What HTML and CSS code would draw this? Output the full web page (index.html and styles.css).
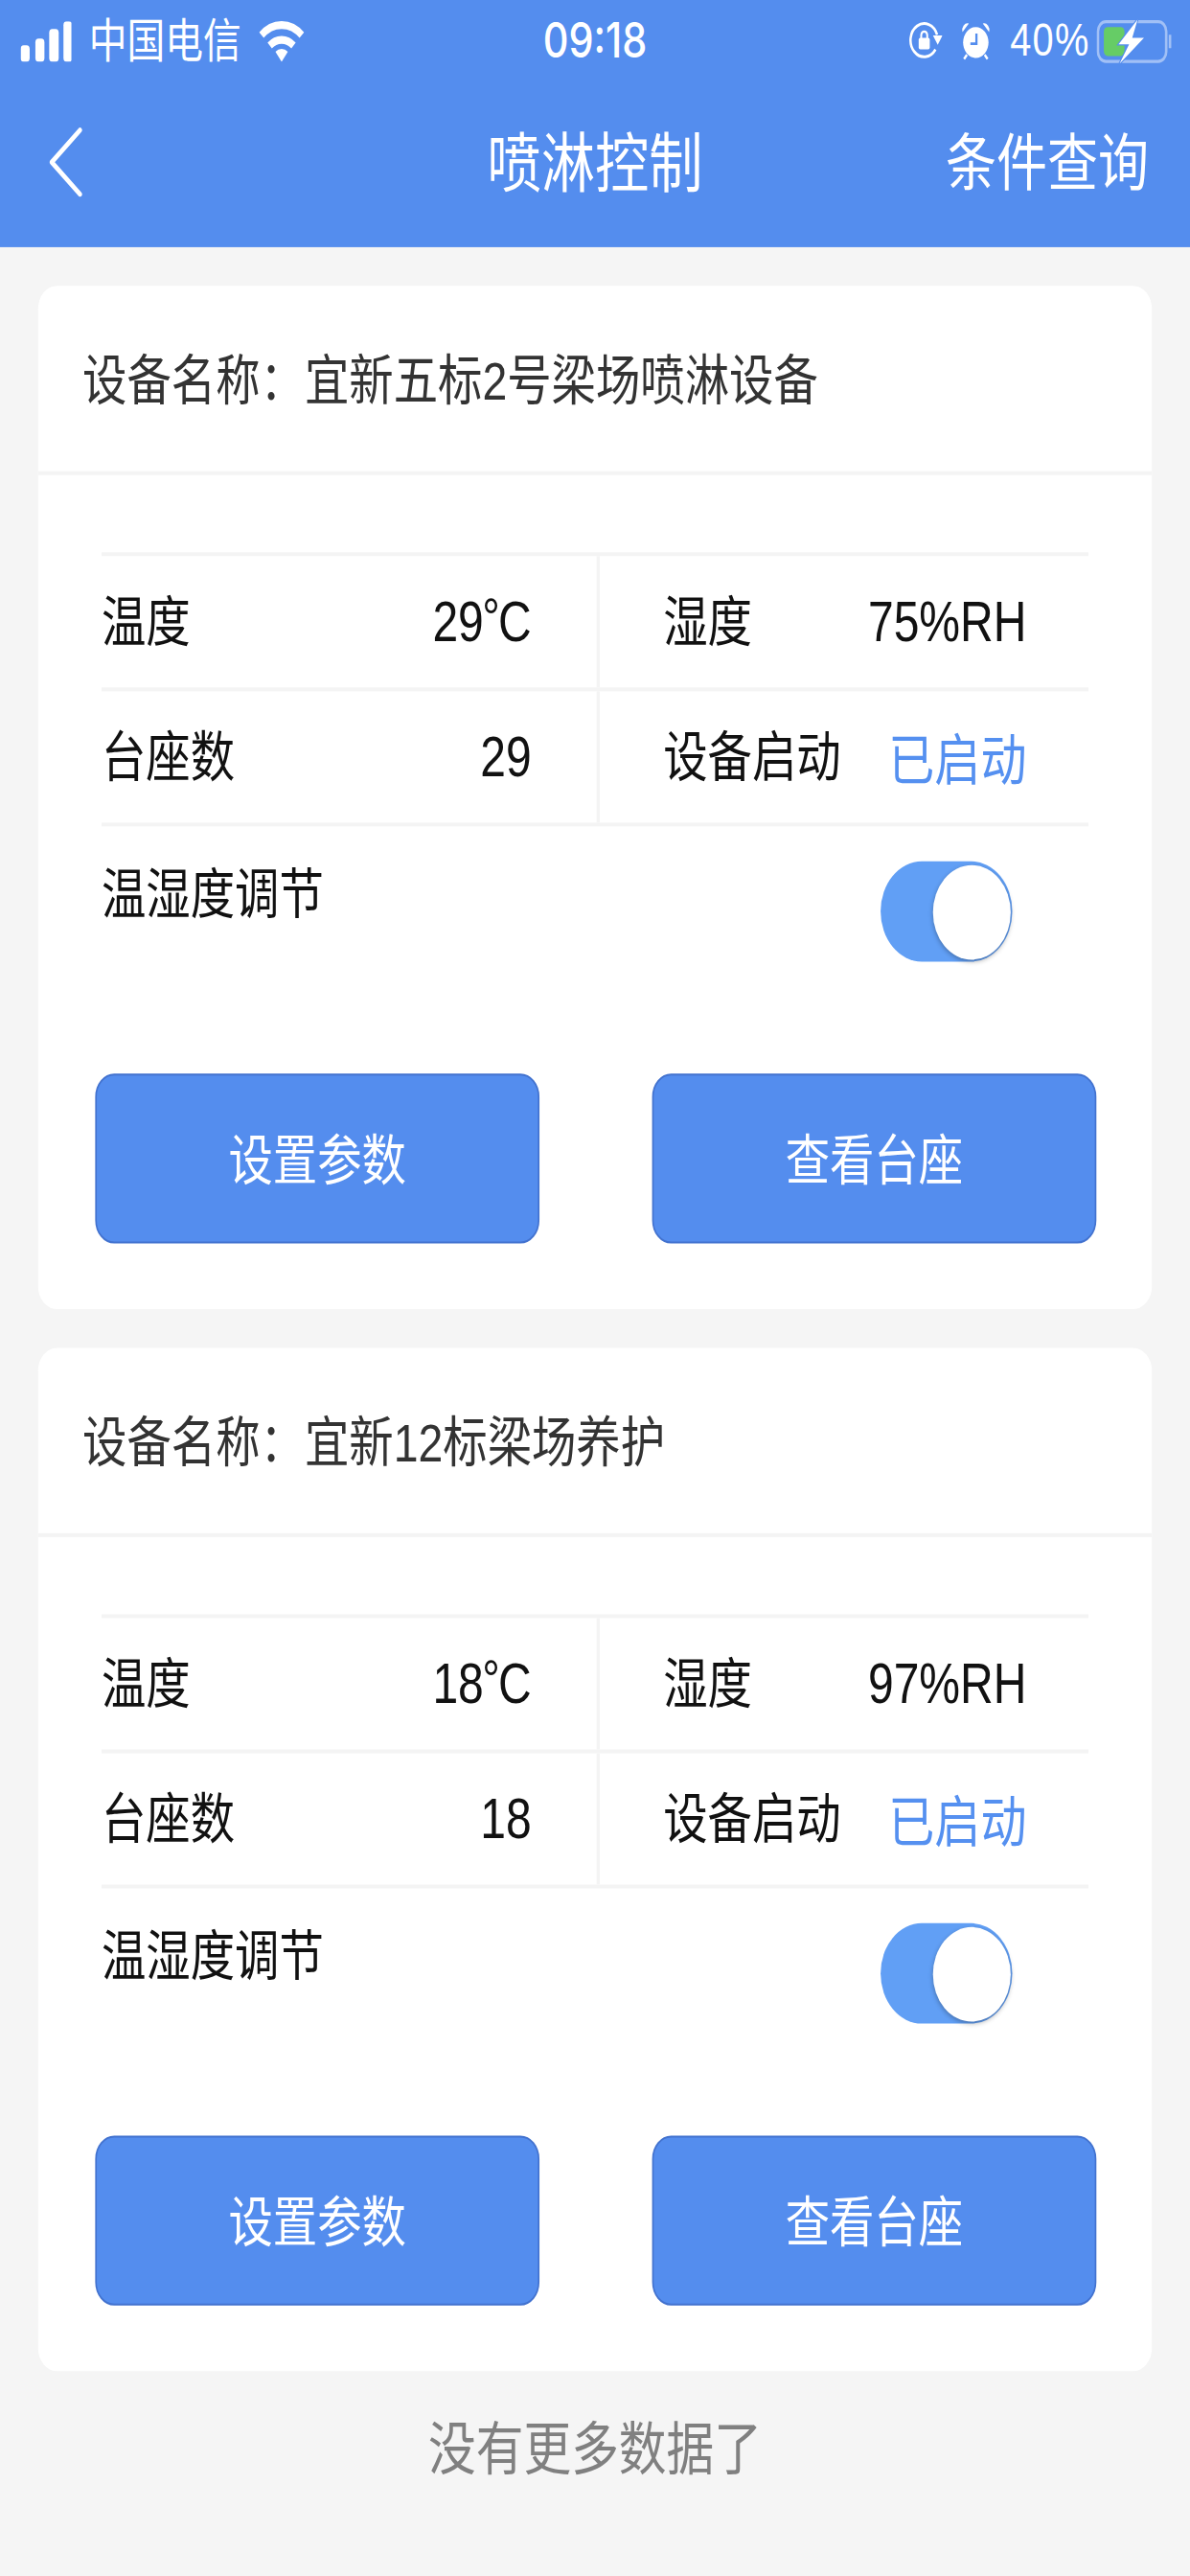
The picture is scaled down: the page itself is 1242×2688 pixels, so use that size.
FILE: index.html
```html
<!DOCTYPE html>
<html lang="zh-CN">
<head>
    <meta charset="UTF-8">
    <meta name="viewport" content="width=device-width, initial-scale=1.0">
    <title>喷淋控制</title>
    <link rel="stylesheet" href="styles.css">
</head>
<body>
<div class="screen">
    <header class="top">
        <div class="status">
            <div class="status-left">
                <svg class="signal" viewBox="0 0 32 21" width="32" height="21" fill="#fff">
                    <rect x="0" y="12.5" width="5.7" height="8.5" rx="2"/>
                    <rect x="9.3" y="9" width="5.7" height="12" rx="2"/>
                    <rect x="18" y="4" width="6" height="17" rx="2"/>
                    <rect x="27" y="0" width="5.5" height="21" rx="2"/>
                </svg>
                <span class="carrier">中国电信</span>
                <svg class="wifi" viewBox="0 0 29 22" width="29" height="22" fill="none" stroke="#fff">
                    <path d="M1.8 8.2A18 18 0 0 1 27.2 8.2" stroke-width="4"/>
                    <path d="M7 13.6A11 11 0 0 1 22 13.6" stroke-width="4"/>
                    <path d="M14.5 22L10.6 16.8A6 6 0 0 1 18.4 16.8Z" fill="#fff" stroke="none"/>
                </svg>
            </div>
            <span class="time">09:18</span>
            <div class="status-right">
                <svg class="lock" viewBox="0 0 21 20" width="21" height="20" fill="none" stroke="#fff">
                    <path d="M16.6 14.6A8.6 8.6 0 1 1 17.6 7" stroke-width="1.5"/>
                    <path d="M15 7.4H21L18 12.2Z" fill="#fff" stroke="none"/>
                    <rect x="6" y="8.6" width="7" height="6" rx="1" fill="#fff" stroke="none"/>
                    <path d="M7.6 8.8V7.2A1.9 1.9 0 0 1 11.4 7.2V8.8" stroke-width="1.2"/>
                </svg>
                <svg class="alarm" viewBox="0 0 18 20" width="18" height="20" fill="#fff">
                    <circle cx="9" cy="11" r="8"/>
                    <path d="M0.6 5.6A3.4 3.4 0 0 1 4.6 1.2Z"/>
                    <path d="M17.4 5.6A3.4 3.4 0 0 0 13.4 1.2Z"/>
                    <path d="M3.4 17.4L1.6 19.6M14.6 17.4L16.4 19.6" stroke="#fff" stroke-width="1.4"/>
                    <path d="M9.4 6.4V11.6H5.6" fill="none" stroke="#548dee" stroke-width="1.4"/>
                </svg>
                <span class="battery-text">40%</span>
                <svg class="battery" viewBox="0 0 48 23" width="48" height="23" fill="none">
                    <rect x="1" y="1.2" width="43" height="20.6" rx="5" stroke="#fff" stroke-opacity=".45" stroke-width="1.6"/>
                    <path d="M46.4 8V15" stroke="#fff" stroke-opacity=".45" stroke-width="1.6"/>
                    <rect x="4.7" y="4" width="13" height="15" rx="2.4" fill="#66cc66"/>
                    <path d="M26 0L14 13H20.6L14.6 23L30 9.6H22.6Z" fill="#fff" stroke="#548dee" stroke-width="1.2" paint-order="stroke"/>
                </svg>
            </div>
        </div>
        <nav class="nav">
            <svg class="back" viewBox="0 0 21 36" width="21" height="36" fill="none" stroke="#fff" stroke-width="2.6" stroke-linecap="round" stroke-linejoin="round">
                <path d="M19.4 1.4L1.6 18L19.4 34.6"/>
            </svg>
            <h1 class="nav-title">喷淋控制</h1>
            <a class="nav-action">条件查询</a>
        </nav>
    </header>

    <main class="list">
        <section class="card">
            <div class="card-head">设备名称：宜新五标2号梁场喷淋设备</div>
            <div class="card-body">
                <div class="table">
                    <div class="row">
                        <div class="cell cell-left"><span>温度</span><span>29<span class="deg">°</span>C</span></div>
                        <div class="cell cell-right"><span>湿度</span><span>75%RH</span></div>
                    </div>
                    <div class="row">
                        <div class="cell cell-left"><span>台座数</span><span>29</span></div>
                        <div class="cell cell-right"><span>设备启动</span><span class="on">已启动</span></div>
                    </div>
                    <div class="row-switch">
                        <span class="switch-label">温湿度调节</span>
                        <div class="switch"><div class="knob"></div></div>
                    </div>
                </div>
                <div class="actions">
                    <button type="button" class="btn">设置参数</button>
                    <button type="button" class="btn">查看台座</button>
                </div>
            </div>
        </section>

        <section class="card">
            <div class="card-head">设备名称：宜新12标梁场养护</div>
            <div class="card-body">
                <div class="table">
                    <div class="row">
                        <div class="cell cell-left"><span>温度</span><span>18<span class="deg">°</span>C</span></div>
                        <div class="cell cell-right"><span>湿度</span><span>97%RH</span></div>
                    </div>
                    <div class="row">
                        <div class="cell cell-left"><span>台座数</span><span>18</span></div>
                        <div class="cell cell-right"><span>设备启动</span><span class="on">已启动</span></div>
                    </div>
                    <div class="row-switch">
                        <span class="switch-label">温湿度调节</span>
                        <div class="switch"><div class="knob"></div></div>
                    </div>
                </div>
                <div class="actions">
                    <button type="button" class="btn">设置参数</button>
                    <button type="button" class="btn">查看台座</button>
                </div>
            </div>
        </section>

        <p class="no-more">没有更多数据了</p>
    </main>
</div>
</body>
</html>
```

FILE: styles.css
```css
html, body {
    margin: 0;
    padding: 0;
    width: 1242px;
    height: 2688px;
    overflow: hidden;
    background: #f5f5f5;
}

/* designed at 750 x 1334, the capture was stretched to 1242 x 2688 */
.screen {
    width: 750px;
    height: 1334px;
    overflow: hidden;
    background: #f5f5f5;
    transform: scale(1.656, 2.0149);
    transform-origin: 0 0;
    font-family: "Liberation Sans", "Noto Sans CJK SC", sans-serif;
    color: #111;
}

.top {
    height: 128px;
    background: #548dee;
    color: #fff;
}

.status {
    display: grid;
    grid-template-columns: 1fr auto 1fr;
    align-items: center;
    height: 40px;
    font-size: 24px;
}

.status-left {
    display: flex;
    align-items: center;
    padding-left: 13px;
}

.carrier {
    margin-left: 11px;
    margin-top: 2px;
    line-height: 40px;
}

.wifi {
    margin-left: 11px;
}

.time {
    font-family: Inter, "Liberation Sans", sans-serif;
    font-size: 25px;
    font-weight: 500;
}

.status-right {
    display: flex;
    align-items: center;
    justify-content: flex-end;
    padding-right: 11px;
}

.alarm {
    margin-left: 12px;
}

.battery-text {
    margin-left: 13px;
    letter-spacing: 0.8px;
}

.battery {
    margin-left: 4px;
}

.nav {
    display: grid;
    grid-template-columns: 1fr auto 1fr;
    align-items: center;
    height: 84px;
    padding: 0 31px 4px;
}

.back {
    margin-top: 3px;
}

.nav-title {
    margin: 0;
    font-size: 34px;
    font-weight: 400;
}

.nav-action {
    margin-right: -5px;
    font-size: 32px;
    text-align: right;
}

.list {
    padding: 20px 24px 0;
}

.card {
    height: 530px;
    margin-bottom: 20px;
    background: #fff;
    border-radius: 12px;
}

.card-head {
    height: 96px;
    line-height: 100px;
    padding-left: 28px;
    font-size: 28px;
    color: #333;
    border-bottom: 2px solid #f4f4f4;
}

.card-body {
    padding: 40px 35px 0 36px;
}

.table {
    margin: 0 5px 0 4px;
    font-size: 28px;
}

.row {
    display: grid;
    grid-template-columns: 314px 1fr;
    height: 70px;
    box-sizing: border-box;
    border-top: 2px solid #f4f4f4;
}

.cell {
    display: flex;
    align-items: center;
    justify-content: space-between;
    padding-bottom: 1px;
}

.cell > span:first-child {
    margin-bottom: 3px;
}

.cell > span:last-child {
    margin-top: 2px;
    font-size: 29px;
}

.deg {
    margin: 0 -1px;
    font-size: 28px;
    line-height: 0;
    vertical-align: 3px;
}

.cell-left {
    padding-right: 41px;
    border-right: 2px solid #f4f4f4;
}

.cell-right {
    padding-left: 40px;
    padding-right: 39px;
}

.cell > .on {
    margin-top: 0;
    margin-bottom: 3px;
    font-size: 28px;
    color: #5590f0;
}

.row-switch {
    display: flex;
    justify-content: space-between;
    align-items: flex-start;
    box-sizing: border-box;
    height: 71px;
    border-top: 2px solid #f4f4f4;
}

.switch-label {
    line-height: 72px;
}

.switch {
    display: flex;
    justify-content: flex-end;
    align-items: center;
    width: 83px;
    height: 52px;
    margin: 18px 48px 0 0;
    padding-right: 1px;
    box-sizing: border-box;
    background: #619ff5;
    border-radius: 26px;
}

.knob {
    width: 49px;
    height: 49px;
    background: #fff;
    border-radius: 50%;
    box-shadow: 0 1px 3px rgba(0, 0, 0, 0.3);
}

.actions {
    display: flex;
    justify-content: space-between;
    margin-top: 59px;
}

.btn {
    width: 280px;
    height: 88px;
    padding: 0 0 2px;
    font-family: inherit;
    font-size: 28px;
    color: #fff;
    background: #548dee;
    border: 1px solid #4272cf;
    border-radius: 12px;
}

.no-more {
    margin: 0;
    padding-top: 2px;
    line-height: 38px;
    text-align: center;
    font-size: 30px;
    color: #808080;
}
```
